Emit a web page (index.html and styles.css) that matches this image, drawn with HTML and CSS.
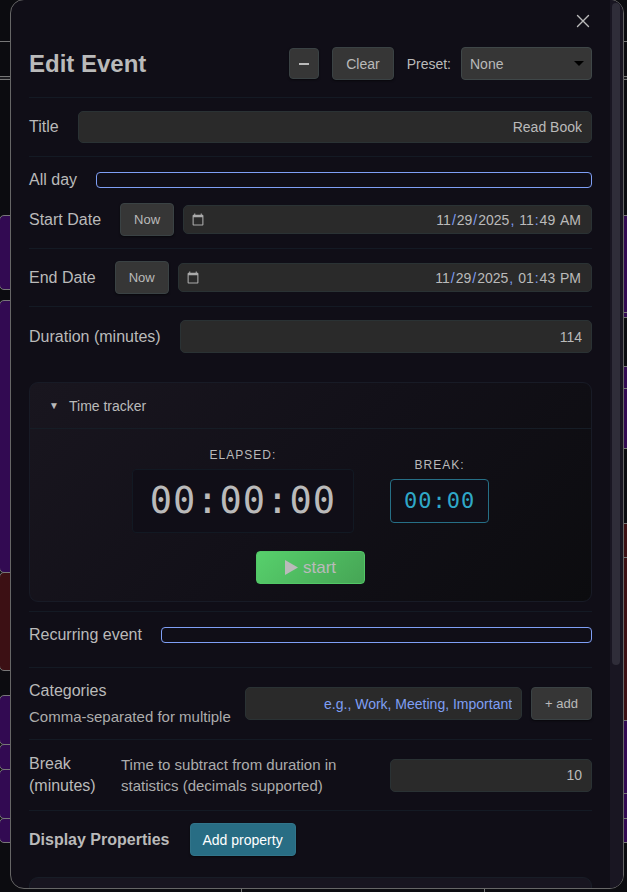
FILE: index.html
```html
<!DOCTYPE html>
<html lang="en">
<head>
  <meta charset="UTF-8" />
  <meta name="viewport" content="width=device-width, initial-scale=1.0">
  <title>Edit Event</title>
  <link rel="stylesheet" href="styles.css">
</head>
<body>
  <!-- calendar behind the dialog -->
  <div class="calendar">
    <div class="calendar-head"></div>
    <div class="calendar-allday"></div>
    <div class="calendar-grid">
      <div class="day">
        <div class="event" style="top: 135px; height: 75px"></div>
        <div class="event" style="top: 220px; height: 273px"></div>
        <div class="event red" style="top: 492px; height: 99px"></div>
        <div class="event" style="top: 615px; height: 50px"></div>
        <div class="event" style="top: 664px; height: 26px"></div>
        <div class="event" style="top: 689px; height: 50px"></div>
        <div class="event" style="top: 738px; height: 25px"></div>
      </div>
      <div class="day"></div>
      <div class="day">
        <div class="event" style="top: 135px; height: 98px"></div>
        <div class="event" style="top: 232px; height: 6px"></div>
        <div class="event" style="top: 286px; height: 23px"></div>
        <div class="event" style="top: 308px; height: 61px"></div>
        <div class="event red" style="top: 443px; height: 35px"></div>
        <div class="event red" style="top: 477px; height: 164px"></div>
        <div class="event" style="top: 640px; height: 74px"></div>
        <div class="event" style="top: 713px; height: 26px"></div>
        <div class="event" style="top: 738px; height: 25px"></div>
      </div>
    </div>
  </div>

  <div class="modal" role="dialog" aria-labelledby="modalTitle">
    <div class="modal-content">
      <div class="close-row">
        <button class="close-btn" aria-label="Close">
          <svg width="14" height="14" viewBox="0 0 14 14" fill="none" stroke="currentColor" stroke-width="1.4" stroke-linecap="round"><path d="M1.5 1.5l11 11M12.5 1.5l-11 11"/></svg>
        </button>
      </div>

      <header class="modal-header">
        <h2 id="modalTitle">Edit Event</h2>
        <button class="btn minimize" aria-label="Minimize">
          <svg width="12" height="12" viewBox="0 0 12 12"><path d="M1 6h10" stroke="currentColor" stroke-width="2"/></svg>
        </button>
        <button class="btn clear">Clear</button>
        <label class="preset-label" for="preset">Preset:</label>
        <select id="preset" class="preset"><option>None</option></select>
      </header>

      <div class="row">
        <label for="title">Title</label>
        <input id="title" class="field" type="text" value="Read Book">
      </div>

      <div class="row short">
        <label for="allDay">All day</label>
        <input id="allDay" class="toggle" type="checkbox">
      </div>

      <div class="row short plain">
        <label for="startDate">Start Date</label>
        <button class="btn now">Now</button>
        <input id="startDate" class="field date" type="datetime-local" value="2025-11-29T11:49">
      </div>

      <div class="row short">
        <label for="endDate">End Date</label>
        <button class="btn now">Now</button>
        <input id="endDate" class="field date" type="datetime-local" value="2025-11-29T13:43">
      </div>

      <div class="row">
        <label for="duration">Duration (minutes)</label>
        <input id="duration" class="field" type="number" value="114">
      </div>

      <section class="tracker">
        <button class="tracker-head"><span class="arrow">▼</span>Time tracker</button>
        <div class="tracker-body">
          <div class="clocks">
            <div class="clock">
              <span class="clock-label">ELAPSED:</span>
              <div class="elapsed">00:00:00</div>
            </div>
            <div class="clock">
              <span class="clock-label">BREAK:</span>
              <div class="break">00:00</div>
            </div>
          </div>
          <button class="start-btn">
            <svg width="13" height="15" viewBox="0 0 13 15"><path d="M0 0l13 7.5L0 15z" fill="currentColor"/></svg>
            start
          </button>
        </div>
      </section>

      <div class="row short recurring">
        <label for="recurring">Recurring event</label>
        <input id="recurring" class="toggle" type="checkbox">
      </div>

      <div class="row short">
        <div class="info">
          <label for="categories">Categories</label>
          <p class="desc">Comma-separated for multiple</p>
        </div>
        <input id="categories" class="field" type="text" placeholder="e.g., Work, Meeting, Important">
        <button class="btn add">+ add</button>
      </div>

      <div class="row break-row">
        <label for="breakMinutes">Break (minutes)</label>
        <p class="desc">Time to subtract from duration in statistics (decimals supported)</p>
        <input id="breakMinutes" class="field" type="number" value="10">
      </div>

      <div class="row short">
        <h3>Display Properties</h3>
        <button class="btn accent">Add property</button>
      </div>

      <div class="panel"></div>
    </div>
    <div class="scrollbar"><div class="thumb"></div></div>
  </div>
</body>
</html>
```
FILE: styles.css
```css
:root {
  --bg: #0c0c10;
  --modal-bg: #100e17;
  --text: #bababa;
  --line: #141a24;
  --field-bg: #2a2a2a;
  --button-bg: #363636;
  --control-border: #2a3234;
  --accent: #7f9ff5;
  --cyan: #2fa8c8;
}

* {
  box-sizing: border-box;
}

body {
  margin: 0;
  height: 100vh;
  overflow: hidden;
  background: var(--bg);
  color: var(--text);
  font-family: "Liberation Sans", Arial, sans-serif;
  font-size: 16px;
  line-height: 22px;
}

h2, h3, p {
  margin: 0;
}

button, input, select {
  font-family: inherit;
  color: inherit;
}

button {
  cursor: pointer;
}

/* Calendar */
.calendar {
  display: flex;
  flex-direction: column;
  height: 100%;
  overflow: hidden;
}

.calendar-head {
  height: 42px;
  border-bottom: 1px solid #777;
}

.calendar-allday {
  height: 38px;
  border-bottom: 1px solid #777;
  box-shadow: inset 0 -2px #1c1c20, inset 0 -3px #777;
}

.calendar-grid {
  flex: 1;
  display: grid;
  grid-template-columns: 242px 243px 1fr;
}

.day {
  position: relative;
  border-right: 1px solid #777;
}

.day:last-child {
  margin-right: -40px;
  border-right: none;
}

.event {
  position: absolute;
  left: -1px;
  right: 0;
  background: #320a52;
  border: 1px solid #777;
  border-radius: 5px;
}

.event.red {
  background: #3c1014;
}

/* Dialog */
.modal {
  position: fixed;
  inset: -1px 3px 3px 10px;
  display: flex;
  background: var(--modal-bg);
  border: 1px solid #666;
  border-radius: 14px;
  overflow: hidden;
}

.modal-content {
  flex: 1;
  min-width: 0;
  padding: 0 18px;
  overflow-y: auto;
  scrollbar-width: none;
}

.scrollbar {
  width: 13px;
  padding: 3px 3px 3px 2px;
  background: #191622;
}

.thumb {
  height: 75%;
  border-radius: 4px;
  background: #2f2d39;
}

.close-row {
  display: flex;
  justify-content: flex-end;
  height: 47px;
  padding: 14px 2px;
}

.close-btn {
  display: flex;
  height: 14px;
  padding: 0;
  background: none;
  border: none;
}

.modal-header {
  display: flex;
  align-items: center;
  padding-bottom: 17px;
}

.modal-header h2 {
  flex: 1;
  font-size: 24px;
  line-height: 32px;
}

.btn {
  height: 33px;
  padding: 0 13px;
  background: var(--button-bg);
  border: 1px solid #3a4244;
  border-radius: 4px;
  font-size: 13px;
  white-space: nowrap;
  box-shadow: 0 1px 2px rgba(0, 0, 0, 0.5);
}

.minimize {
  display: flex;
  align-items: center;
  height: 31px;
  padding: 0 8px;
}

.clear {
  margin-left: 13px;
  font-size: 14px;
}

.preset-label {
  margin: 0 10px 0 13px;
  font-size: 14px;
}

.preset {
  appearance: none;
  width: 131px;
  height: 33px;
  padding: 0 8px;
  background: var(--button-bg) url("data:image/svg+xml,%3Csvg xmlns='http://www.w3.org/2000/svg' width='10' height='5'%3E%3Cpath d='M0 0h10L5 5z'/%3E%3C/svg%3E") no-repeat right 7px center;
  border: 1px solid #3f4748;
  border-radius: 4px;
  font-size: 14px;
}

/* Rows */
.row {
  display: flex;
  align-items: center;
  padding: 13px 0;
  border-top: 1px solid var(--line);
}

.row.short {
  padding: 12px 0;
}

.row.plain {
  padding-top: 0;
  border-top: none;
}

.row.recurring {
  padding-bottom: 21px;
}

.row label {
  margin-right: 19px;
}

.row h3 {
  margin-right: 20px;
  font-size: 16px;
}

.row .info {
  margin-right: 14px;
}

.info label {
  display: block;
  margin: 0 0 4px;
}

.desc {
  font-size: 15px;
  line-height: 21px;
  color: #acacac;
}

.field {
  flex: 1;
  min-width: 0;
  height: 33px;
  padding: 0 9px;
  background: var(--field-bg);
  border: 1px solid var(--control-border);
  border-radius: 5px;
  font-size: 14px;
  text-align: right;
}

.field::placeholder {
  color: var(--accent);
}

.field[type="number"] {
  appearance: textfield;
}

.field::-webkit-inner-spin-button {
  display: none;
}

#title {
  height: 32px;
}

.date {
  height: 29px;
  margin-left: 9px;
  padding-left: 7px;
  color-scheme: dark;
}

.date::-webkit-datetime-edit {
  text-align: right;
}

.date::-webkit-datetime-edit-text {
  color: var(--accent);
}

.date::-webkit-calendar-picker-indicator {
  order: -1;
  margin: 0;
  padding: 0;
  opacity: 0.6;
}

.toggle {
  appearance: none;
  flex: 1;
  height: 16px;
  margin: 0;
  border: 1px solid var(--accent);
  border-radius: 4px;
}

.add {
  margin-left: 9px;
}

.break-row {
  min-height: 71px;
}

.break-row label {
  width: 73px;
}

.break-row .desc {
  flex: 1;
  padding-right: 32px;
}

.break-row .field {
  flex: 0 0 202px;
}

.accent {
  padding: 0 12px;
  background: #286d84;
  border-color: #31748a;
  color: #fff;
  font-size: 14px;
}

/* Time tracker */
.tracker {
  margin: 16px 0 9px;
  background: linear-gradient(135deg, #19161f, #121018 50%, #0c0c0f);
  border: 1px solid #181b26;
  border-radius: 9px;
}

.tracker-head {
  display: flex;
  align-items: center;
  width: 100%;
  height: 46px;
  padding: 0 19px;
  background: none;
  border: none;
  border-bottom: 1px solid #161d26;
  font-size: 14px;
}

.arrow {
  width: 20px;
  font-size: 10px;
  text-align: left;
}

.tracker-body {
  display: flex;
  flex-direction: column;
  align-items: center;
  gap: 18px;
  padding: 18px 0 17px;
}

.clocks {
  display: flex;
  align-items: center;
  gap: 36px;
}

.clock {
  display: flex;
  flex-direction: column;
  align-items: center;
  gap: 6px;
}

.clock-label {
  font-size: 12px;
  line-height: 16px;
  letter-spacing: 1px;
}

.elapsed, .break {
  background: var(--modal-bg);
  border: 1px solid #121923;
  border-radius: 4px;
  font-family: "DejaVu Sans Mono", monospace;
  letter-spacing: 1px;
}

.elapsed {
  padding: 0 17px;
  font-size: 37px;
  line-height: 62px;
}

.break {
  padding: 0 13px;
  border-color: #266f86;
  color: var(--cyan);
  font-size: 22px;
  line-height: 42px;
}

.start-btn {
  display: flex;
  align-items: center;
  gap: 5px;
  height: 33px;
  padding: 0 28px;
  background: linear-gradient(135deg, #57d06c, #46a555);
  border: 1px solid #52c866;
  border-radius: 4px;
  font-size: 17px;
}

.panel {
  height: 60px;
  margin-top: 9px;
  background: #181520;
  border: 1px solid #181d27;
  border-radius: 9px;
}
```
